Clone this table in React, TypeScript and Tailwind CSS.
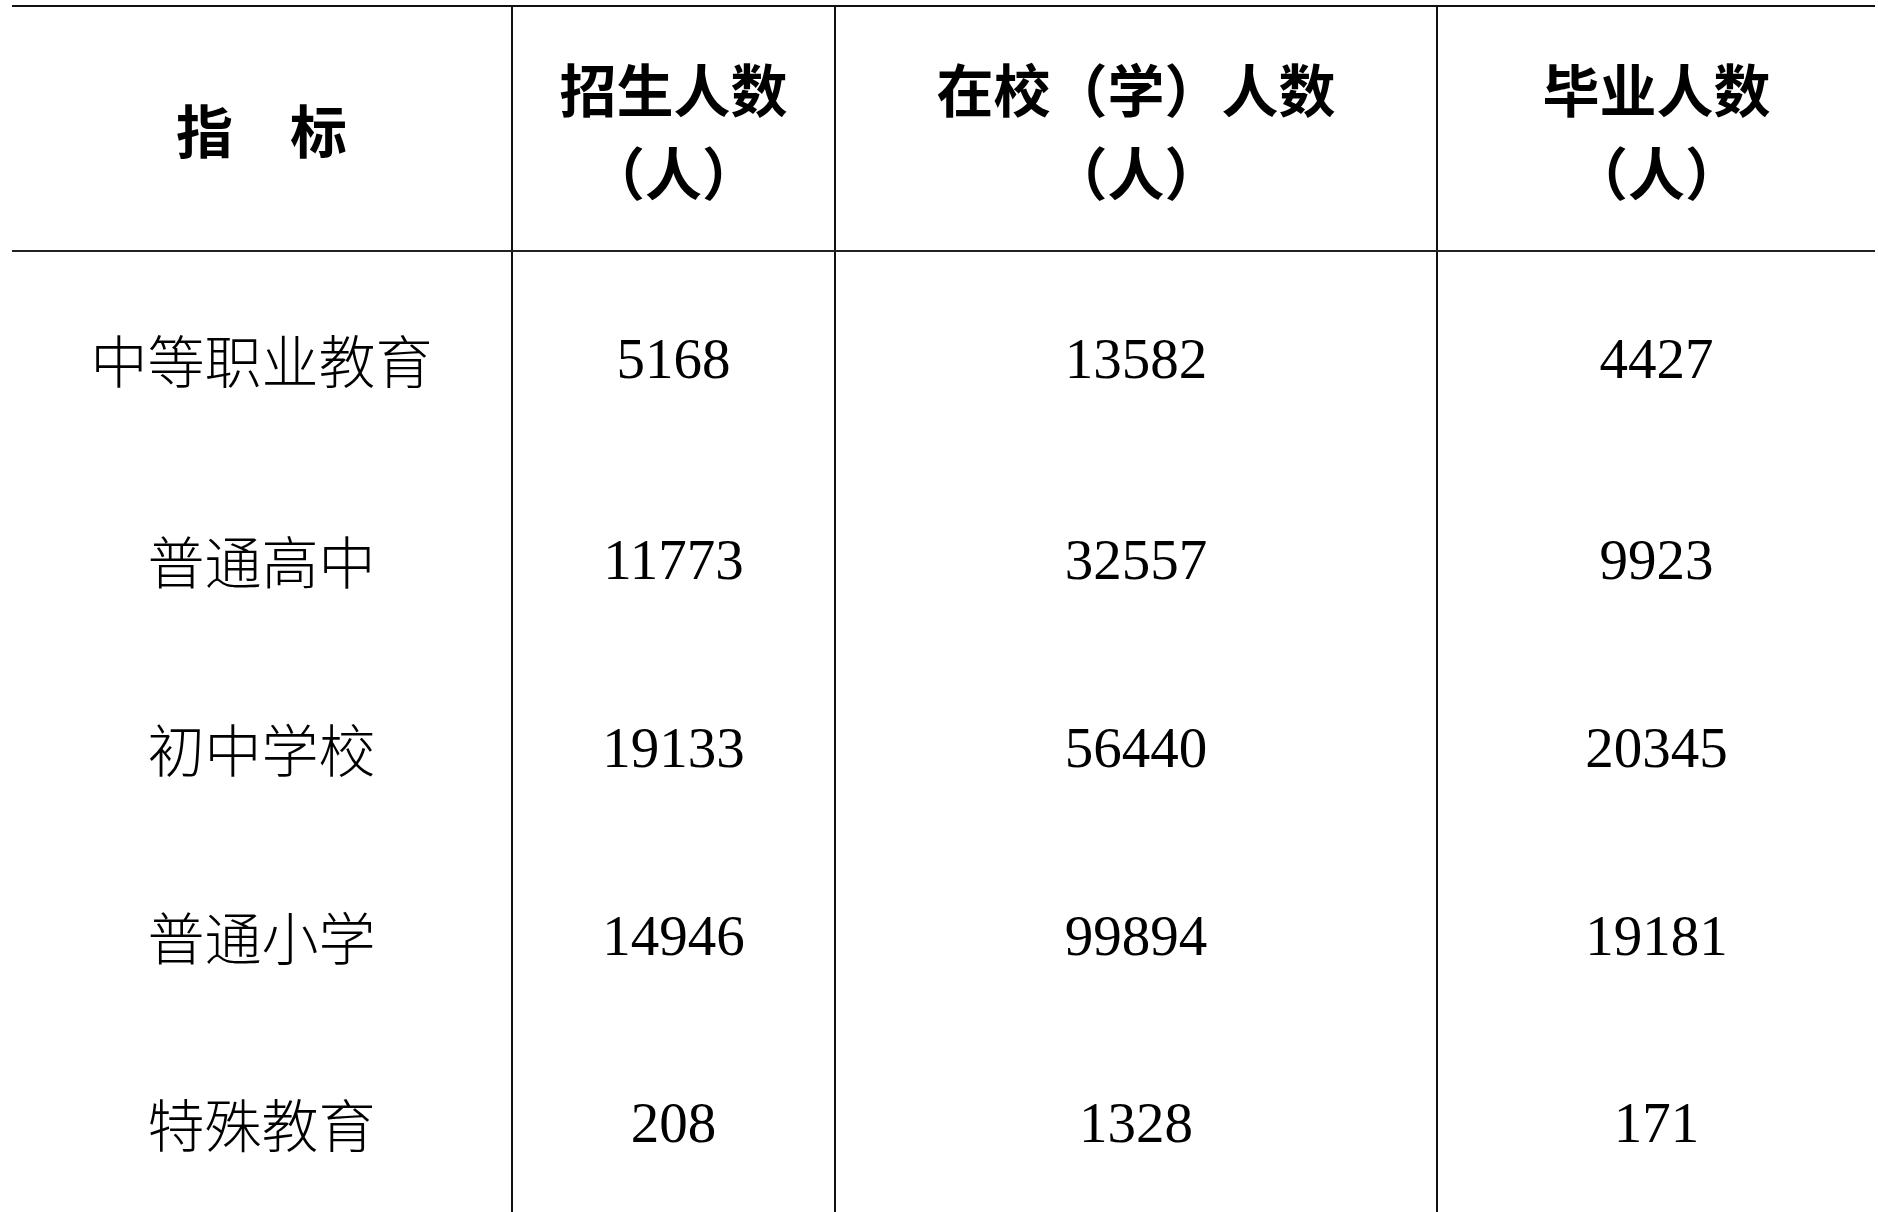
const rows = [
  { name: "中等职业教育", enroll: "5168", current: "13582", grad: "4427", h: "h-[212px]" },
  { name: "普通高中", enroll: "11773", current: "32557", grad: "9923", h: "h-[190px]" },
  { name: "初中学校", enroll: "19133", current: "56440", grad: "20345", h: "h-[186px]" },
  { name: "普通小学", enroll: "14946", current: "99894", grad: "19181", h: "h-[190px]" },
  { name: "特殊教育", enroll: "208", current: "1328", grad: "171", h: "h-[184px]" },
]

const cjk = "font-['Noto_Sans_CJK_SC',sans-serif]"
const serif = "font-['Liberation_Serif','Noto_Sans_CJK_SC',serif]"

function HeadCell({ lines, first }: { lines: string[]; first?: boolean }) {
  return (
    <div
      className={`flex flex-col items-center justify-center ${first ? "" : "border-l-2 border-[#111]"} ${cjk} font-bold text-[57px] leading-[83px] text-black`}
    >
      {lines.map((l) => (
        <span key={l}>{l}</span>
      ))}
    </div>
  )
}

export default function App() {
  return (
    <div className="w-[1878px] h-[1212px] overflow-hidden bg-white pt-[5px] pl-[12px]">
      <div className="w-[1863px] border-t-2 border-[#111]">
        {/* header */}
        <div className="grid grid-cols-[499px_323px_602px_439px] h-[245px] border-b-2 border-[#222]">
          <HeadCell first lines={["指　标"]} />
          <HeadCell lines={["招生人数", "（人）"]} />
          <HeadCell lines={["在校（学）人数", "（人）"]} />
          <HeadCell lines={["毕业人数", "（人）"]} />
        </div>

        {/* body */}
        {rows.map((r) => (
          <div key={r.name} className={`grid grid-cols-[499px_323px_602px_439px] ${r.h} text-[57px] leading-none text-black`}>
            <div className={`flex items-center justify-center ${cjk} font-light`}>{r.name}</div>
            <div className={`flex items-center justify-center border-l-2 border-[#111] ${serif}`}>{r.enroll}</div>
            <div className={`flex items-center justify-center border-l-2 border-[#111] ${serif}`}>{r.current}</div>
            <div className={`flex items-center justify-center border-l-2 border-[#111] ${serif}`}>{r.grad}</div>
          </div>
        ))}
      </div>
    </div>
  )
}
